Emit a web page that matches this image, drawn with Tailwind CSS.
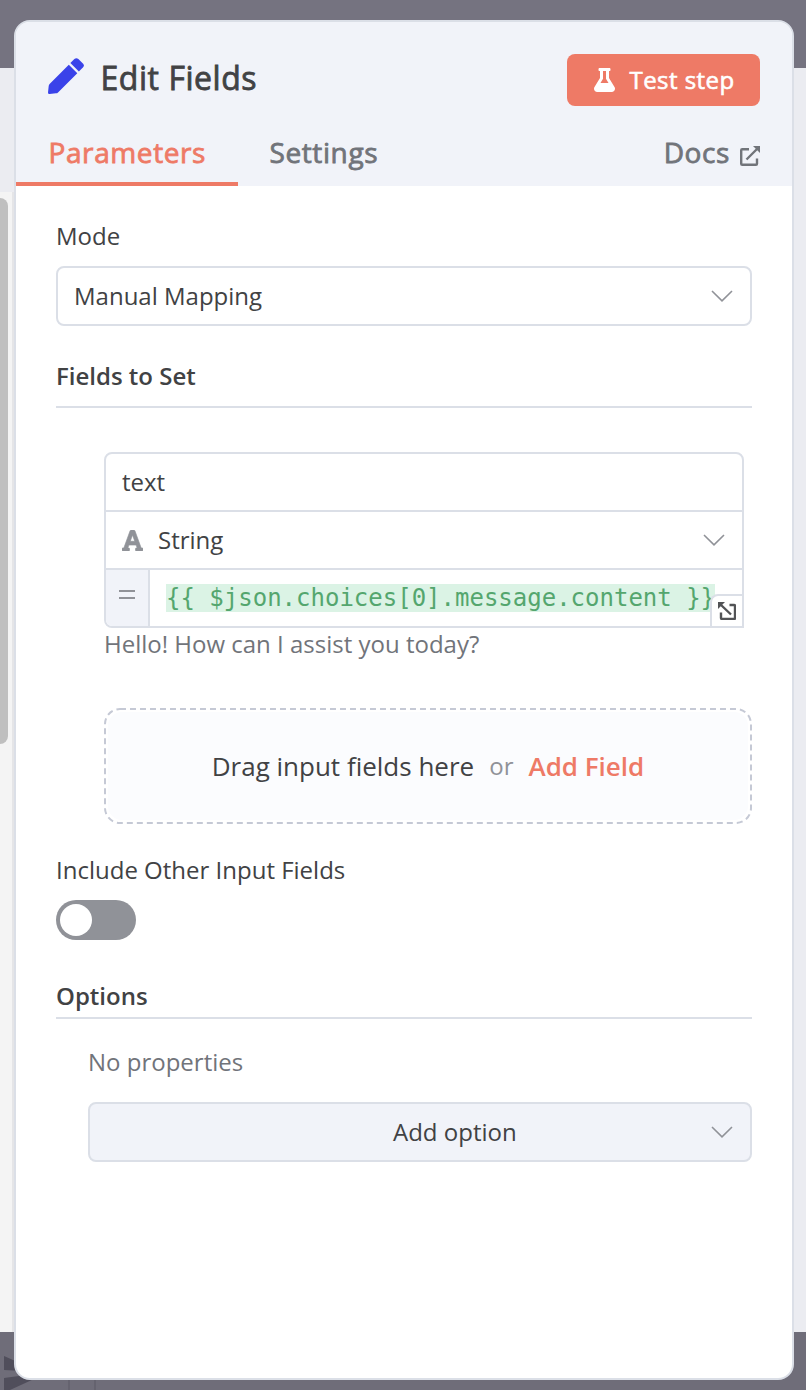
<!DOCTYPE html>
<html lang="en">
<head>
<meta charset="utf-8">
<title>Edit Fields</title>
<script src="https://cdn.jsdelivr.net/npm/@tailwindcss/browser@4"></script>
</head>
<body class="relative h-[1390px] w-[806px] overflow-hidden bg-[#ebecf1] px-[14px] pt-5 font-['Open_Sans',sans-serif] text-2xl text-[#414244]">
  <!-- Dimmed canvas behind the panel -->
  <div class="absolute inset-x-0 top-0 h-[68px] bg-[#757380]"></div>
  <div class="absolute left-0 top-[192px] h-[1140px] w-3 bg-[#f4f4f4]"></div>
  <div class="absolute left-0 top-[198px] h-[546px] w-2 rounded-r-lg bg-[#bfbfbf]"></div>
  <div class="absolute left-3 top-[192px] h-[1140px] w-[2px] bg-[#e5e5e7]"></div>
  <div class="absolute inset-x-0 bottom-0 h-[58px] bg-[#6f6d79]"></div>
  <svg class="absolute left-0 top-[1350px]" width="110" height="40" viewBox="0 0 110 40"><path d="M4 6L40 22L4 20zM4 28L34 24V29L10 40H4z" fill="#504e5b"/><path d="M69 29v11M95 29v11" stroke="#65636f" stroke-width="2"/></svg>

  <main class="relative flex h-[1360px] w-[780px] flex-col overflow-hidden rounded-2xl border-2 border-[#dbdfe7] bg-white">
    <header class="h-[164px] bg-[#f1f3f9] pt-8">
      <div class="flex h-[52px] items-center px-8">
        <svg class="mb-2 h-9 w-9" viewBox="0 0 36 36" fill="#3a42e9"><path d="M20.8 6.7L29.3 15.2L10 34.4Q9.2 35.2 8 35.3L1.6 36Q0 36.100 0 34.400L.7 28Q.8 26.800 1.600 26z"/><path d="M22.400 5.100L26.400 1.100Q28.400-.8 30.400 1.100L34.900 5.600Q36.900 7.600 34.900 9.600L30.900 13.600z"/></svg>
        <h1 class="mb-1 ml-[16.5px] whitespace-nowrap text-[32px] leading-[44px] tracking-[0.55px] [-webkit-text-stroke:0.8px_currentColor]">Edit Fields</h1>
        <button class="ml-auto flex h-[52px] w-[193px] items-center rounded-lg bg-[#ee7a66] pl-[27px] text-white">
          <svg class="h-6 w-[21px]" viewBox="0 0 448 512" fill="currentColor"><path d="M437.200 403.500L320 215V64h8c13.300 0 24-10.700 24-24V24c0-13.300-10.700-24-24-24H120c-13.300 0-24 10.700-24 24v16c0 13.300 10.700 24 24 24h8v151L10.800 403.500C-18.500 450.600 15.300 512 70.900 512h306.200c55.700 0 89.400-61.500 60.100-108.500zM137.900 320l48.200-77.600c3.700-5.200 5.800-11.600 5.800-18.400V64h64v160c0 6.900 2.200 13.200 5.800 18.400l48.200 77.600h-172z"/></svg>
          <span class="ml-[14.5px] whitespace-nowrap tracking-[0.45px] [-webkit-text-stroke:0.6px_currentColor]">Test step</span>
        </button>
      </div>
      <nav class="flex h-20 items-start text-[28px] leading-[38px] tracking-[0.6px] text-[#71747a] [-webkit-text-stroke:0.8px_currentColor]">
        <div class="h-20 w-[222px] border-b-4 border-[#ee7a66] pl-[32.5px] pt-[27px] text-[#ee7a66]">Parameters</div>
        <div class="pl-[31.5px] pt-[27px]">Settings</div>
        <div class="ml-auto flex pr-8 pt-[27px]"><span>Docs</span>
          <svg class="ml-2.5 mt-[13px] h-5 w-5" viewBox="0 0 20 20" fill="none" stroke="currentColor" stroke-width="2.400"><path d="M9 3.200H2.200Q1.200 3.200 1.200 4.200V17.800Q1.200 18.800 2.200 18.800H16Q17 18.800 17 17.800V12.500M6.500 13.500L17 3"/><path d="M13 0H20V7z" fill="currentColor" stroke="none"/></svg>
        </div>
      </nav>
    </header>

    <section class="flex flex-col px-10 pt-8">
      <label class="h-9 leading-9">Mode</label>
      <div class="mt-3 flex h-[60px] items-center justify-between rounded-lg border-2 border-[#dbdfe7] pl-4 pr-[17px]">
        <span>Manual Mapping</span>
        <svg width="22" height="12" viewBox="0 0 22 12" fill="none" stroke="#909298" stroke-width="1.600"><path d="M1 1L11 10.800L21 1"/></svg>
      </div>
      <h2 class="mt-8 h-[50px] border-b-2 border-[#dbdfe7] leading-9 font-semibold">Fields to Set</h2>

      <div class="ml-12 mr-2 mt-11 flex h-[176px] flex-col overflow-hidden rounded-lg rounded-br-none border-2 border-[#dbdfe7]">
        <div class="flex h-[58px] items-center border-b-2 border-[#dbdfe7] pl-4">text</div>
        <div class="flex h-[58px] items-center border-b-2 border-[#dbdfe7] pl-[15.5px] pr-[17px]">
          <svg class="h-[21px] w-[21px]" viewBox="0 0 448 448" fill="#909298" stroke="#909298" stroke-width="14"><path d="M432 384h-23L277 21A32 32 0 0 0 247 0h-46a32 32 0 0 0-30 21L39 384H16a16 16 0 0 0-16 16v32a16 16 0 0 0 16 16h128a16 16 0 0 0 16-16v-32a16 16 0 0 0-16-16h-20l23-64h154l23 64h-20a16 16 0 0 0-16 16v32a16 16 0 0 0 16 16h128a16 16 0 0 0 16-16v-32a16 16 0 0 0-16-16zM176 240l48-133 48 133z"/></svg>
          <span class="ml-[15.5px]">String</span>
          <svg class="ml-auto" width="22" height="12" viewBox="0 0 22 12" fill="none" stroke="#909298" stroke-width="1.600"><path d="M1 1L11 10.800L21 1"/></svg>
        </div>
        <div class="relative flex h-14">
          <div class="flex w-11 items-start justify-center border-r-2 border-[#dbdfe7] bg-[#f1f3f9]"><svg class="mt-5" width="16" height="10" viewBox="0 0 16 10" stroke="#909298" stroke-width="2"><path d="M0 1H16M0 8H16"/></svg></div>
          <code class="ml-4 mt-3.5 h-7 whitespace-nowrap bg-[#dbf3e5] font-['DejaVu_Sans_Mono',monospace] text-2xl leading-7 text-[#54a66e]">{{ $json.choices[0].message.content }}</code>
          <div class="absolute bottom-0 right-0 flex h-8 w-8 items-center justify-center rounded-tl-lg border-l-2 border-t-2 border-[#dbdfe7] bg-white">
            <svg width="18" height="18" viewBox="0 0 18 18" fill="none" stroke="#525356" stroke-width="2.400"><path d="M11.500 3H16Q17 3 17 4V16Q17 17 16 17H4Q3 17 3 16V10.500M2.500 2.500L13 12.500" /><path d="M0 0H7L0 7z" fill="#525356" stroke="none"/></svg>
          </div>
        </div>
      </div>
      <p class="ml-12 h-9 leading-[32px] text-[#71747a]">Hello! How can I assist you today?</p>

      <div class="relative ml-12 mt-11 flex h-[116px] items-center justify-center">
        <svg class="absolute inset-0" width="648" height="116" viewBox="0 0 648 116"><rect x="4" y="4" width="640" height="108" rx="14" fill="#fbfcfe"/><rect x="1" y="1" width="646" height="114" rx="15" fill="none" stroke="#c5c9d5" stroke-width="2" stroke-dasharray="6 4"/></svg>
        <div class="relative flex items-center whitespace-nowrap text-[26px]"><span>Drag input fields here</span><span class="mx-[15px] text-2xl text-[#909298]">or</span><span class="font-semibold text-[#ee7a66]">Add Field</span></div>
      </div>

      <label class="mt-7 h-9 leading-9">Include Other Input Fields</label>
      <div class="mt-3 flex h-10 w-20 items-center rounded-full bg-[#909298] pl-1"><div class="h-8 w-8 rounded-full bg-white"></div></div>
      <h2 class="mt-[38px] h-[41px] border-b-2 border-[#dbdfe7] font-semibold leading-9">Options</h2>
      <p class="ml-8 mt-[25px] h-9 leading-9 text-[#71747a]">No properties</p>
      <div class="ml-8 mt-[22px] flex h-[60px] items-center rounded-lg border-2 border-[#dbdfe7] bg-[#f1f3f9] pr-[17px]">
        <span class="ml-[303px]">Add option</span>
        <svg class="ml-auto" width="22" height="12" viewBox="0 0 22 12" fill="none" stroke="#909298" stroke-width="1.600"><path d="M1 1L11 10.800L21 1"/></svg>
      </div>
    </section>
  </main>
</body>
</html>
